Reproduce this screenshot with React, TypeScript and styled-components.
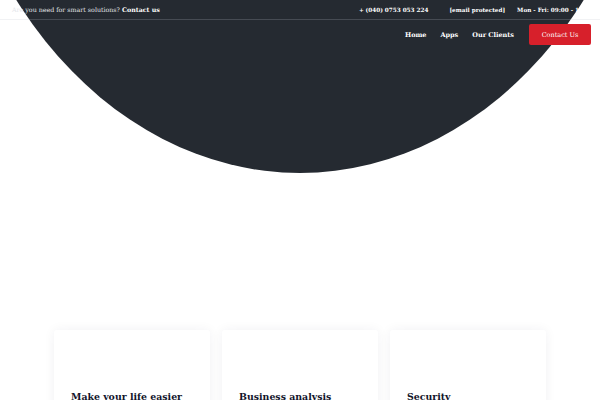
import styled, { createGlobalStyle } from 'styled-components';

const GlobalStyle = createGlobalStyle`
  * {
    box-sizing: border-box;
  }
  body {
    margin: 0;
    background: #ffffff;
    font-family: 'DejaVu Serif', serif;
  }
`;

const features = ['Make your life easier', 'Business analysis', 'Security'];

const App = () => {
  return (
    <>
      <GlobalStyle />
      <Page>
        <HeroShape />
        <Header>
          <TopBar>
            <TopText>
              Are you need for smart solutions? <strong>Contact us</strong>
            </TopText>
            <TopInfo>
              <InfoItem $gap={21}>+ (040) 0753 053 224</InfoItem>
              <InfoItem $gap={12}>[email protected]</InfoItem>
              <InfoItem $gap={0}>Mon - Fri: 09:00 - 18:00</InfoItem>
            </TopInfo>
          </TopBar>
          <NavBar>
            <NavLink href="#">Home</NavLink>
            <NavLink href="#">Apps</NavLink>
            <NavLink href="#">Our Clients</NavLink>
            <ContactBtn href="#">Contact Us</ContactBtn>
          </NavBar>
        </Header>
        <Features>
          {features.map((title) => (
            <Card key={title}>
              <CardIcon />
              <CardTitle>{title}</CardTitle>
            </Card>
          ))}
        </Features>
      </Page>
    </>
  );
};

export default App;

const Page = styled.div`
  position: relative;
  width: 100%;
  min-height: 400px;
  overflow: hidden;
`;

const HeroShape = styled.div`
  position: absolute;
  left: -60px;
  top: -727px;
  width: 720px;
  height: 900px;
  border-radius: 50%;
  background-color: #252a31;
  z-index: 0;
`;

const Header = styled.header`
  position: relative;
  z-index: 1;
`;

const TopBar = styled.div`
  display: flex;
  justify-content: space-between;
  align-items: center;
  height: 20px;
  padding: 0 0 0 12px;
  border-bottom: 1px solid rgba(190, 195, 205, 0.22);
  color: #e4e6ea;
  white-space: nowrap;
`;

const TopText = styled.p`
  margin: 0;
  font-size: 6.3px;

  strong {
    color: #ffffff;
    font-weight: 700;
  }
`;

const TopInfo = styled.div`
  display: flex;
  align-items: center;
  margin-right: 7px;
  font-size: 5.7px;
`;

const InfoItem = styled.span<{ $gap: number }>`
  margin-right: ${({ $gap }) => $gap}px;
  font-weight: 700;
  color: #ffffff;
`;

const NavBar = styled.nav`
  display: flex;
  justify-content: flex-end;
  align-items: center;
  gap: 14px;
  height: 29px;
  padding-right: 9px;
`;

const NavLink = styled.a`
  font-size: 6.5px;
  font-weight: 700;
  color: #ffffff;
  text-decoration: none;
`;

const ContactBtn = styled.a`
  display: flex;
  align-items: center;
  justify-content: center;
  width: 62px;
  height: 21px;
  margin-left: 1px;
  border-radius: 2px;
  background-color: #d7202b;
  font-size: 6.5px;
  color: #ffffff;
  text-decoration: none;
`;

const Features = styled.section`
  position: relative;
  z-index: 1;
  display: grid;
  grid-template-columns: repeat(3, 156px);
  justify-content: center;
  gap: 12px;
  padding-top: 281px;
`;

const Card = styled.div`
  display: flex;
  flex-direction: column;
  height: 180px;
  padding: 15px 17px;
  border-radius: 3px;
  background-color: #ffffff;
  box-shadow: 0 0 12px rgba(20, 30, 60, 0.06);
`;

const CardIcon = styled.div`
  width: 40px;
  height: 40px;
  margin-bottom: 6px;
`;

const CardTitle = styled.h3`
  margin: 0;
  font-size: 9.4px;
  font-weight: 700;
  color: #12142a;
`;
